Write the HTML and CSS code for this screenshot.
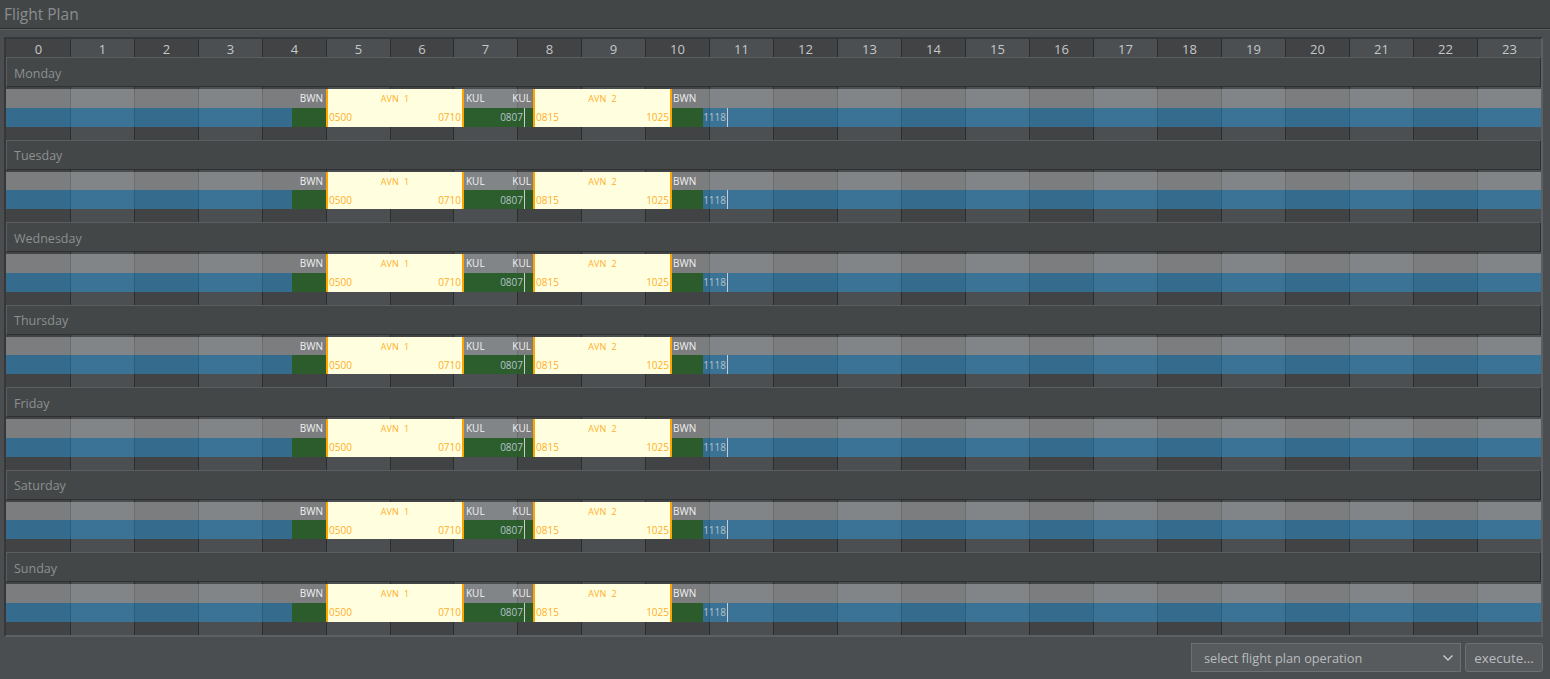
FILE: index.html
```html
<!DOCTYPE html>
<html lang="en">
<head>
<meta charset="UTF-8">
<meta name="viewport" content="width=device-width, initial-scale=1.0">
<title>Flight Plan</title>
<link rel="stylesheet" href="styles.css">
</head>
<body>
<h1 class="title-bar">Flight Plan</h1>

<div class="panel">
    <div class="schedule">
        <!-- hour columns run behind all the days -->
        <div class="hours">
            <div class="hour">0</div>
            <div class="hour">1</div>
            <div class="hour">2</div>
            <div class="hour">3</div>
            <div class="hour">4</div>
            <div class="hour">5</div>
            <div class="hour">6</div>
            <div class="hour">7</div>
            <div class="hour">8</div>
            <div class="hour">9</div>
            <div class="hour">10</div>
            <div class="hour">11</div>
            <div class="hour">12</div>
            <div class="hour">13</div>
            <div class="hour">14</div>
            <div class="hour">15</div>
            <div class="hour">16</div>
            <div class="hour">17</div>
            <div class="hour">18</div>
            <div class="hour">19</div>
            <div class="hour">20</div>
            <div class="hour">21</div>
            <div class="hour">22</div>
            <div class="hour">23</div>
        </div>

        <div class="days">
            <section class="day">
                <div class="day-name">Monday</div>
                <div class="track">
                    <div class="lane-sky"></div>
                    <div class="lane-sea"></div>
                    <div class="ground g1"></div>
                    <div class="label bwn-out">BWN</div>
                    <div class="flight avn1"><span class="flight-no">AVN 1</span><span class="times"><span>0500</span><span>0710</span></span></div>
                    <div class="ground g2"></div>
                    <div class="label kul-in">KUL</div>
                    <div class="label kul-out">KUL</div>
                    <div class="mark m1">0807</div>
                    <div class="flight avn2"><span class="flight-no">AVN 2</span><span class="times"><span>0815</span><span>1025</span></span></div>
                    <div class="ground g3"></div>
                    <div class="label bwn-in">BWN</div>
                    <div class="mark m2">1118</div>
                </div>
            </section>
            <section class="day">
                <div class="day-name">Tuesday</div>
                <div class="track">
                    <div class="lane-sky"></div>
                    <div class="lane-sea"></div>
                    <div class="ground g1"></div>
                    <div class="label bwn-out">BWN</div>
                    <div class="flight avn1"><span class="flight-no">AVN 1</span><span class="times"><span>0500</span><span>0710</span></span></div>
                    <div class="ground g2"></div>
                    <div class="label kul-in">KUL</div>
                    <div class="label kul-out">KUL</div>
                    <div class="mark m1">0807</div>
                    <div class="flight avn2"><span class="flight-no">AVN 2</span><span class="times"><span>0815</span><span>1025</span></span></div>
                    <div class="ground g3"></div>
                    <div class="label bwn-in">BWN</div>
                    <div class="mark m2">1118</div>
                </div>
            </section>
            <section class="day">
                <div class="day-name">Wednesday</div>
                <div class="track">
                    <div class="lane-sky"></div>
                    <div class="lane-sea"></div>
                    <div class="ground g1"></div>
                    <div class="label bwn-out">BWN</div>
                    <div class="flight avn1"><span class="flight-no">AVN 1</span><span class="times"><span>0500</span><span>0710</span></span></div>
                    <div class="ground g2"></div>
                    <div class="label kul-in">KUL</div>
                    <div class="label kul-out">KUL</div>
                    <div class="mark m1">0807</div>
                    <div class="flight avn2"><span class="flight-no">AVN 2</span><span class="times"><span>0815</span><span>1025</span></span></div>
                    <div class="ground g3"></div>
                    <div class="label bwn-in">BWN</div>
                    <div class="mark m2">1118</div>
                </div>
            </section>
            <section class="day">
                <div class="day-name">Thursday</div>
                <div class="track">
                    <div class="lane-sky"></div>
                    <div class="lane-sea"></div>
                    <div class="ground g1"></div>
                    <div class="label bwn-out">BWN</div>
                    <div class="flight avn1"><span class="flight-no">AVN 1</span><span class="times"><span>0500</span><span>0710</span></span></div>
                    <div class="ground g2"></div>
                    <div class="label kul-in">KUL</div>
                    <div class="label kul-out">KUL</div>
                    <div class="mark m1">0807</div>
                    <div class="flight avn2"><span class="flight-no">AVN 2</span><span class="times"><span>0815</span><span>1025</span></span></div>
                    <div class="ground g3"></div>
                    <div class="label bwn-in">BWN</div>
                    <div class="mark m2">1118</div>
                </div>
            </section>
            <section class="day">
                <div class="day-name">Friday</div>
                <div class="track">
                    <div class="lane-sky"></div>
                    <div class="lane-sea"></div>
                    <div class="ground g1"></div>
                    <div class="label bwn-out">BWN</div>
                    <div class="flight avn1"><span class="flight-no">AVN 1</span><span class="times"><span>0500</span><span>0710</span></span></div>
                    <div class="ground g2"></div>
                    <div class="label kul-in">KUL</div>
                    <div class="label kul-out">KUL</div>
                    <div class="mark m1">0807</div>
                    <div class="flight avn2"><span class="flight-no">AVN 2</span><span class="times"><span>0815</span><span>1025</span></span></div>
                    <div class="ground g3"></div>
                    <div class="label bwn-in">BWN</div>
                    <div class="mark m2">1118</div>
                </div>
            </section>
            <section class="day">
                <div class="day-name">Saturday</div>
                <div class="track">
                    <div class="lane-sky"></div>
                    <div class="lane-sea"></div>
                    <div class="ground g1"></div>
                    <div class="label bwn-out">BWN</div>
                    <div class="flight avn1"><span class="flight-no">AVN 1</span><span class="times"><span>0500</span><span>0710</span></span></div>
                    <div class="ground g2"></div>
                    <div class="label kul-in">KUL</div>
                    <div class="label kul-out">KUL</div>
                    <div class="mark m1">0807</div>
                    <div class="flight avn2"><span class="flight-no">AVN 2</span><span class="times"><span>0815</span><span>1025</span></span></div>
                    <div class="ground g3"></div>
                    <div class="label bwn-in">BWN</div>
                    <div class="mark m2">1118</div>
                </div>
            </section>
            <section class="day">
                <div class="day-name">Sunday</div>
                <div class="track">
                    <div class="lane-sky"></div>
                    <div class="lane-sea"></div>
                    <div class="ground g1"></div>
                    <div class="label bwn-out">BWN</div>
                    <div class="flight avn1"><span class="flight-no">AVN 1</span><span class="times"><span>0500</span><span>0710</span></span></div>
                    <div class="ground g2"></div>
                    <div class="label kul-in">KUL</div>
                    <div class="label kul-out">KUL</div>
                    <div class="mark m1">0807</div>
                    <div class="flight avn2"><span class="flight-no">AVN 2</span><span class="times"><span>0815</span><span>1025</span></span></div>
                    <div class="ground g3"></div>
                    <div class="label bwn-in">BWN</div>
                    <div class="mark m2">1118</div>
                </div>
            </section>
        </div>
    </div>
</div>

<div class="actions">
    <div class="select-box">
        <span>select flight plan operation</span>
        <svg class="chevron" width="12" height="8" viewBox="0 0 12 8"><path d="M1.5 1.5 6 6l4.5-4.5" fill="none" stroke="#c4c8ca" stroke-width="1.5"/></svg>
    </div>
    <button class="execute" type="button">execute...</button>
</div>
</body>
</html>
```

FILE: styles.css
```css
/* Basic styling */
body {
    margin: 0;
    height: 679px;
    overflow: hidden;
    background-color: #4a4e50;
    font-family: "Open Sans", sans-serif;
    color: #c4c8ca;
}
.title-bar {
    margin: 0;
    height: 28px;
    padding-left: 4px;
    box-sizing: content-box;
    background-color: #424647;
    border-bottom: 1px solid #2e3031;
    box-shadow: 0 1px 0 #5a5e60;
    font-size: 15.5px;
    font-weight: normal;
    line-height: 28px;
    color: #8a8e8f;
}

/* Panel and hour columns */
.panel {
    margin: 8px 7px 0 4px;
    border: 2px solid;
    border-color: #353738 #5c6062 #5c6062 #353738;
}
.schedule {
    display: grid;
    height: 596px;
}
.hours, .days {
    grid-area: 1 / 1;
    min-width: 0;
}
.hours {
    display: grid;
    grid-template-columns: repeat(6, 64px) 63px repeat(17, 64px);
}
.hour {
    height: 596px;
    background-color: #424344;
    border-left: 1px solid #2b2d2e;
    font-size: 13px;
    line-height: 20px;
    text-align: center;
}
.hour:first-child {
    border-left-color: #424344;
}
.hour:nth-child(even) {
    background-color: #4b4f51;
}

/* Day blocks */
.days {
    padding-top: 18px;
}
.day {
    height: 82.5px;
}
.day-name {
    box-sizing: border-box;
    height: 30px;
    padding: 1.5px 0 0 7px;
    background-color: #434748;
    border: 1px solid;
    border-color: #5a5e60 #2e3031 #2e3031 #5a5e60;
    font-size: 12.5px;
    line-height: 27px;
    color: #8c9091;
}
.track {
    display: grid;
    grid-template-columns: 286px 34px 138px 69px 139px 31px 25px 1fr;
    grid-template-rows: 18.75px 18.75px;
    margin-top: 2px;
    font-size: 10px;
    line-height: 19px;
}
.lane-sky {
    grid-area: 1 / 1 / 2 / -1;
    background-color: rgba(255, 255, 255, 0.31);
}
.lane-sea {
    grid-area: 2 / 1 / 3 / -1;
    background-color: rgba(36, 170, 255, 0.4);
}
.ground {
    background-color: rgba(43, 91, 35, 0.92);
}
.g1 { grid-area: 2 / 2; }
.g2 { grid-area: 2 / 4; }
.g3 { grid-area: 2 / 6; }

/* Airport codes and times */
.label {
    color: #f0f2f3;
}
.bwn-out {
    grid-area: 1 / 1 / 2 / 3;
    justify-self: end;
    padding-right: 3px;
}
.kul-in {
    grid-area: 1 / 4;
    padding-left: 2px;
}
.kul-out {
    grid-area: 1 / 4;
    justify-self: end;
    padding-right: 2px;
}
.bwn-in {
    grid-area: 1 / 6 / 2 / 8;
    padding-left: 1px;
}
.mark {
    justify-self: end;
    padding: 0.5px 1px 0 0;
    border-right: 1px solid #c8ccce;
    line-height: 18.25px;
    color: #b4c2ca;
}
.m1 {
    grid-area: 2 / 4;
    margin-right: 8px;
}
.m2 {
    grid-area: 2 / 7;
}

/* Flight boxes */
.flight {
    display: flex;
    flex-direction: column;
    background-color: #ffffe0;
    border-left: 2px solid #ffa500;
    border-right: 2px solid #ffa500;
    color: #ffae2a;
}
.avn1 { grid-area: 1 / 3 / 3 / 4; }
.avn2 { grid-area: 1 / 5 / 3 / 6; }
.flight-no {
    height: 18.75px;
    font-size: 9px;
    line-height: 20px;
    text-align: center;
    word-spacing: 3px;
}
.times {
    display: flex;
    justify-content: space-between;
    padding: 0.5px 1px 0;
    line-height: 18.25px;
}

/* Bottom controls */
.actions {
    display: flex;
    justify-content: flex-end;
    gap: 4px;
    margin: 6px 7px 0 0;
}
.select-box, .execute {
    box-sizing: border-box;
    height: 29px;
    background-color: #575b5d;
    border: 1px solid #6c7072;
    font-family: inherit;
    color: #b9bdbf;
}
.select-box {
    display: flex;
    align-items: center;
    justify-content: space-between;
    width: 270px;
    padding: 0 6px 0 12px;
    font-size: 12.75px;
}
.execute {
    width: 78px;
    padding: 0;
    border-radius: 3px;
    font-size: 13.4px;
}
```
